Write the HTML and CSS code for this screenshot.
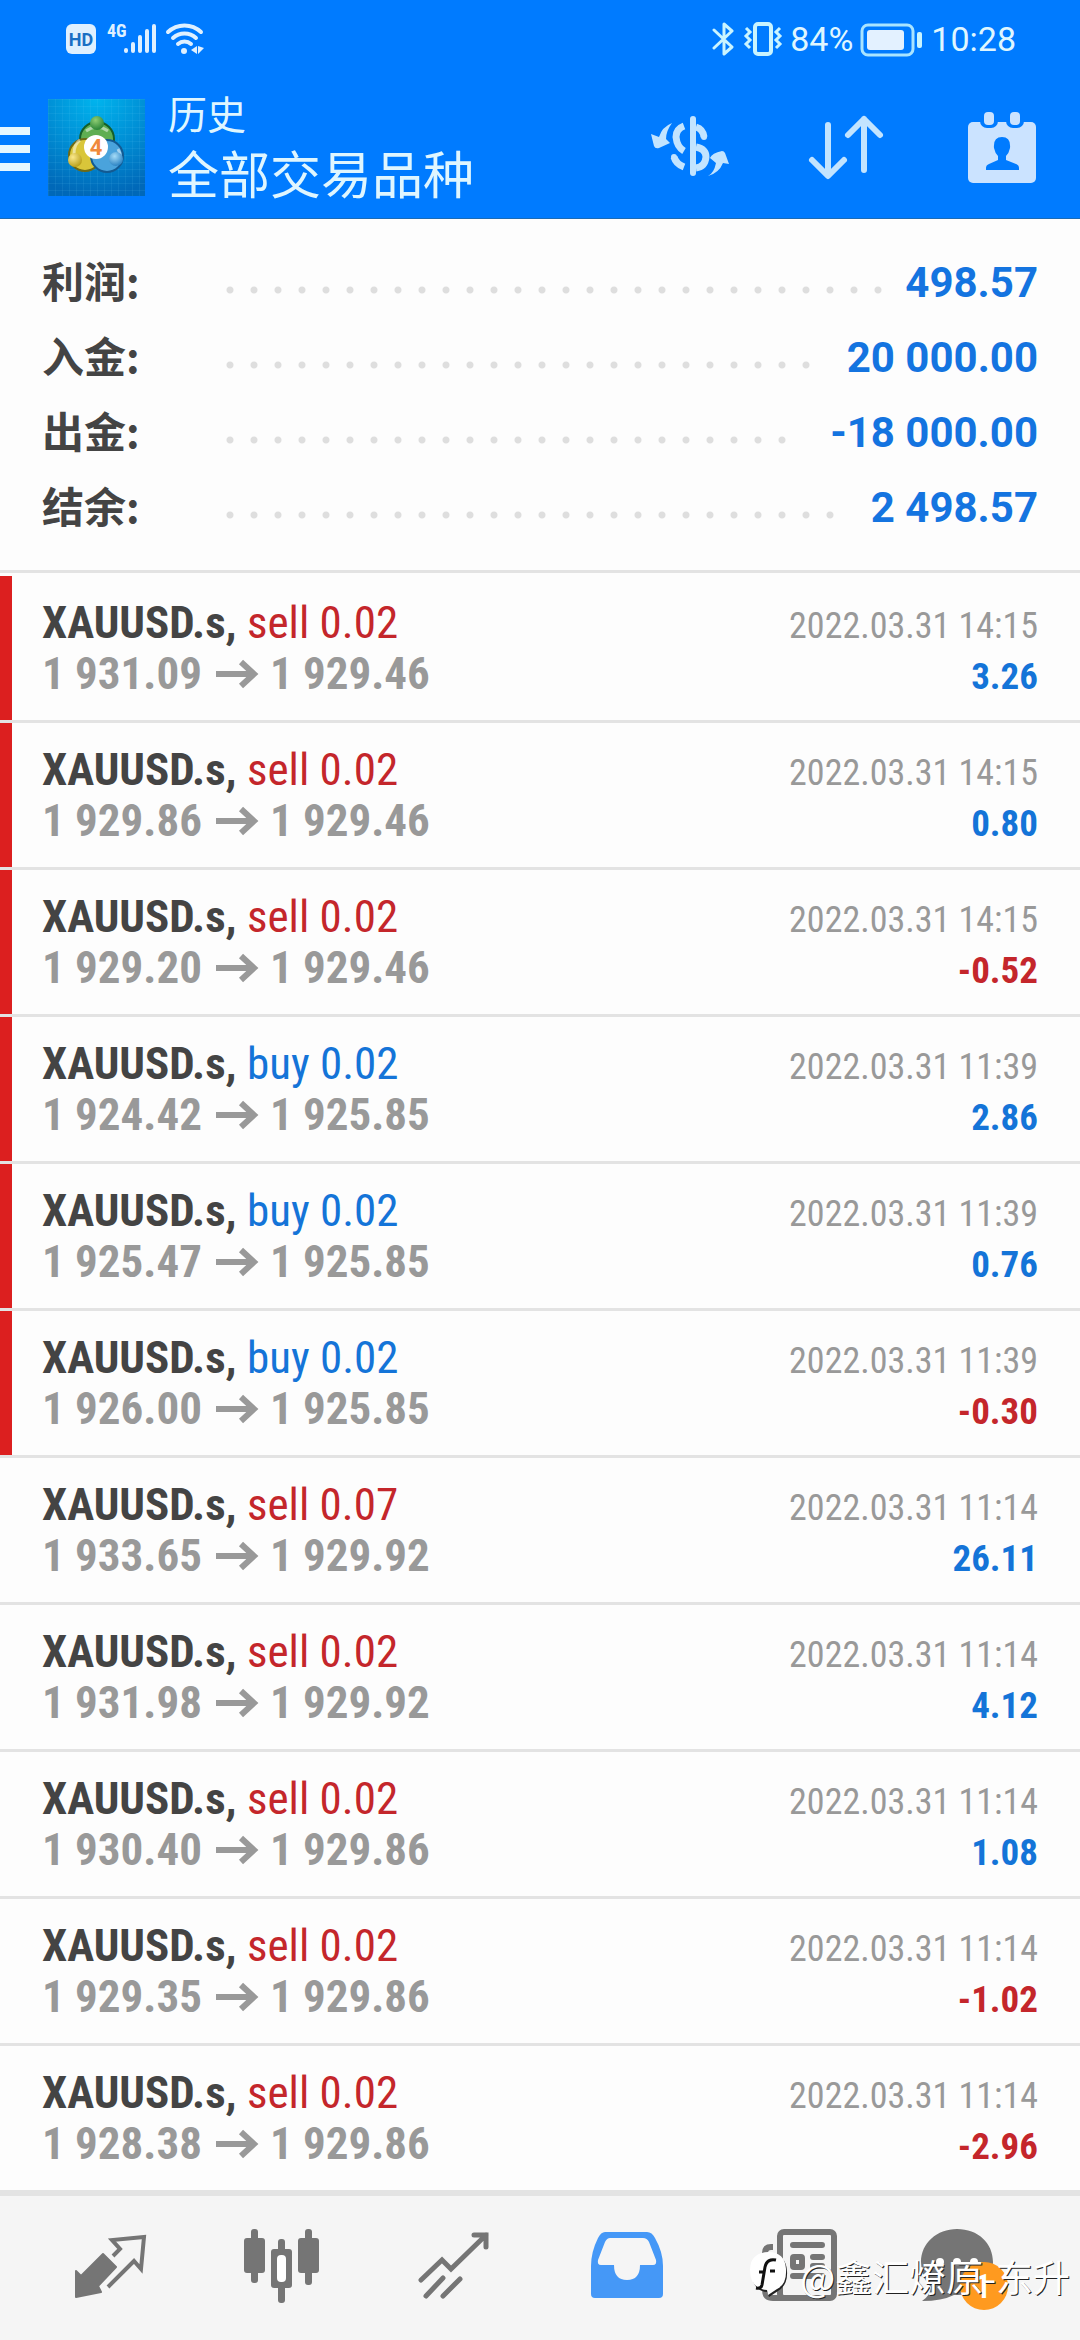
FILE: index.html
```
<!DOCTYPE html>
<html lang="zh-CN">
<head>
<meta charset="utf-8">
<meta name="viewport" content="width=device-width, initial-scale=1">
<title>历史</title>
<link rel="stylesheet" href="styles.css">
</head>
<body>
<div class="page">
  <header class="header">
    <div class="status">
      <svg class="status-icons" width="140" height="36" viewBox="0 0 140 36">
        <rect x="0" y="3" width="30" height="30" rx="6" fill="#dff0ff"/>
        <text x="15" y="25" class="badge-hd">HD</text>
        <text x="41" y="16" class="badge-4g">4G</text>
        <g stroke="#dff0ff" stroke-width="4" stroke-linecap="round">
          <path d="M60 29v1M67 23v7M74 16v14M81 10v20M88 5v25"/>
        </g>
        <g fill="none" stroke="#dff0ff" stroke-width="4" stroke-linecap="round">
          <path d="M102 11a24 24 0 0 1 33 0M107 17a17 17 0 0 1 23 0M112 23a10 10 0 0 1 13 0"/>
        </g>
        <circle cx="118" cy="30" r="3" fill="#dff0ff"/>
        <path d="M125 29l6-4v8zM138 27l-6 6v-8z" fill="#dff0ff"/>
      </svg>
      <div class="status-right">
        <svg width="22" height="36" viewBox="0 0 22 36" fill="none" stroke="#c9f4ff" stroke-width="3" stroke-linejoin="round" stroke-linecap="round"><path d="M2 9l18 17-8 7V3l8 7L2 27"/></svg>
        <svg width="40" height="36" viewBox="0 0 40 36" fill="none" stroke="#c9f4ff" stroke-width="3"><rect x="12" y="3" width="16" height="30" rx="3" stroke-width="4"/><path d="M3 7l4 4-4 4 4 4-4 4 4 4M37 7l-4 4 4 4-4 4 4 4-4 4"/></svg>
        <span>84%</span>
        <svg width="64" height="36" viewBox="0 0 64 36"><rect x="2" y="4" width="51" height="30" rx="6" fill="none" stroke="#a9e4ff" stroke-width="3"/><rect x="7" y="9" width="37" height="20" rx="3" fill="#e3f1ff"/><rect x="57" y="11" width="5" height="16" rx="2" fill="#c9f4ff"/></svg>
        <span>10:28</span>
      </div>
    </div>
    <div class="bar">
      <button class="menu" aria-label="菜单"><i></i><i></i><i></i></button>
      <svg class="logo" viewBox="0 0 97 97" role="img" aria-label="MetaTrader 4">
        <defs>
          <radialGradient id="sky" cx=".5" cy="0" r="1"><stop offset="0" stop-color="#00b4ee"/><stop offset=".5" stop-color="#0090d6"/><stop offset="1" stop-color="#0068b8"/></radialGradient>
          <radialGradient id="gr" cx=".4" cy=".3" r=".8"><stop offset="0" stop-color="#8fce74"/><stop offset="1" stop-color="#1c7a2e"/></radialGradient>
          <radialGradient id="ye" cx=".35" cy=".3" r=".8"><stop offset="0" stop-color="#fbe98c"/><stop offset="1" stop-color="#b3980f"/></radialGradient>
          <radialGradient id="bl" cx=".4" cy=".3" r=".8"><stop offset="0" stop-color="#a5dcf7"/><stop offset="1" stop-color="#1b77bd"/></radialGradient>
          <pattern id="grid" width="7" height="7" patternUnits="userSpaceOnUse"><path d="M0 0H7M0 0V7" stroke="#6fd0f5" stroke-opacity=".2"/></pattern>
        </defs>
        <rect width="97" height="97" fill="url(#sky)"/><rect width="97" height="97" fill="url(#grid)"/>
        <circle cx="49" cy="40" r="17" fill="#5fae52" stroke="#155f2a" stroke-width="2"/>
        <circle cx="37" cy="56" r="16" fill="#d9c63a" stroke="#6e6a15" stroke-width="2"/>
        <circle cx="59" cy="57" r="16" fill="#4aa3dc" stroke="#135a92" stroke-width="2"/>
        <path d="M38 32q11-8 22 0M26 55q0-10 6-14M70 50q5 8-2 16" fill="none" stroke="#fff" stroke-opacity=".5" stroke-width="3"/>
        <circle cx="49" cy="24" r="7" fill="url(#gr)"/><circle cx="27" cy="61" r="7" fill="url(#ye)"/><circle cx="68" cy="60" r="7" fill="url(#bl)"/>
        <circle cx="48" cy="48" r="12" fill="#fff"/>
        <text x="48" y="56" class="logo-num">4</text>
      </svg>
      <div class="titles">
        <p class="sub">历史</p>
        <h1>全部交易品种</h1>
      </div>
      <div class="actions">
        <button aria-label="货币">
          <svg width="80" height="80" viewBox="0 0 80 80" fill="#c2e4ff">
            <rect x="40" y="9" width="6" height="60" rx="3"/>
            <g fill="none" stroke="#c2e4ff" stroke-width="7"><path d="M34 19Q26 22 26 30Q27 40 34 44"/><path d="M24 50Q26 57 34 60"/><path d="M46 20Q53 22 54 30M46 40Q56 42 56 50Q55 60 46 61"/></g>
            <circle cx="54" cy="30" r="3"/><circle cx="24" cy="50" r="3"/>
            <path d="M22 16Q12 20 9 30L1 27L4 39Q5 42 9 41L20 36L16 32Q16 24 22 16zM58 69Q64 66 66 56L60 51Q62 46 72 44Q74 44 75 46L79 57L73 56Q69 66 58 69z"/>
          </svg>
        </button>
        <button aria-label="排序">
          <svg width="80" height="80" viewBox="0 0 80 80" fill="none" stroke="#c2e4ff" stroke-width="6" stroke-linecap="round" stroke-linejoin="round"><path d="M22 18V68M6 53L22 69L38 53M58 63V12M42 28L58 12L74 28"/></svg>
        </button>
        <button aria-label="日期">
          <svg width="80" height="80" viewBox="0 0 80 80"><rect x="6" y="15" width="68" height="61" rx="5" fill="#cbe3ff"/><g fill="#007bff"><rect x="18" y="1" width="18" height="20" rx="7"/><rect x="44" y="1" width="18" height="20" rx="7"/><path d="M40 30Q49 30 48 41Q47 46 44 49V53L54 57Q57 58 57 61V63H24V61Q24 58 27 57L36 53V49Q33 46 32 41Q31 30 40 30z"/></g><g fill="#cbe3ff"><rect x="22" y="5" width="10" height="13" rx="4"/><rect x="48" y="5" width="10" height="13" rx="4"/></g></svg>
        </button>
      </div>
    </div>
  </header>

  <main class="main">
    <dl class="summary">
      <div><dt>利润:</dt><dd class="dots"></dd><dd>498.57</dd></div>
      <div><dt>入金:</dt><dd class="dots"></dd><dd>20 000.00</dd></div>
      <div><dt>出金:</dt><dd class="dots"></dd><dd>-18 000.00</dd></div>
      <div><dt>结余:</dt><dd class="dots"></dd><dd>2 498.57</dd></div>
    </dl>
    <svg width="0" height="0" class="defs"><symbol id="arrow" viewBox="0 0 44 30"><path d="M1 15H39M26 3L39 15L26 27" fill="none" stroke="#999" stroke-width="6"/></symbol></svg>
    <ul class="deals">
      <li class="new"><p><b>XAUUSD.s, <span class="sell">sell 0.02</span></b><time>2022.03.31 14:15</time></p><p><span class="price">1 931.09<svg><use href="#arrow"/></svg>1 929.46</span><span class="gain">3.26</span></p></li>
      <li class="new"><p><b>XAUUSD.s, <span class="sell">sell 0.02</span></b><time>2022.03.31 14:15</time></p><p><span class="price">1 929.86<svg><use href="#arrow"/></svg>1 929.46</span><span class="gain">0.80</span></p></li>
      <li class="new"><p><b>XAUUSD.s, <span class="sell">sell 0.02</span></b><time>2022.03.31 14:15</time></p><p><span class="price">1 929.20<svg><use href="#arrow"/></svg>1 929.46</span><span class="loss">-0.52</span></p></li>
      <li class="new"><p><b>XAUUSD.s, <span class="buy">buy 0.02</span></b><time>2022.03.31 11:39</time></p><p><span class="price">1 924.42<svg><use href="#arrow"/></svg>1 925.85</span><span class="gain">2.86</span></p></li>
      <li class="new"><p><b>XAUUSD.s, <span class="buy">buy 0.02</span></b><time>2022.03.31 11:39</time></p><p><span class="price">1 925.47<svg><use href="#arrow"/></svg>1 925.85</span><span class="gain">0.76</span></p></li>
      <li class="new"><p><b>XAUUSD.s, <span class="buy">buy 0.02</span></b><time>2022.03.31 11:39</time></p><p><span class="price">1 926.00<svg><use href="#arrow"/></svg>1 925.85</span><span class="loss">-0.30</span></p></li>
      <li><p><b>XAUUSD.s, <span class="sell">sell 0.07</span></b><time>2022.03.31 11:14</time></p><p><span class="price">1 933.65<svg><use href="#arrow"/></svg>1 929.92</span><span class="gain">26.11</span></p></li>
      <li><p><b>XAUUSD.s, <span class="sell">sell 0.02</span></b><time>2022.03.31 11:14</time></p><p><span class="price">1 931.98<svg><use href="#arrow"/></svg>1 929.92</span><span class="gain">4.12</span></p></li>
      <li><p><b>XAUUSD.s, <span class="sell">sell 0.02</span></b><time>2022.03.31 11:14</time></p><p><span class="price">1 930.40<svg><use href="#arrow"/></svg>1 929.86</span><span class="gain">1.08</span></p></li>
      <li><p><b>XAUUSD.s, <span class="sell">sell 0.02</span></b><time>2022.03.31 11:14</time></p><p><span class="price">1 929.35<svg><use href="#arrow"/></svg>1 929.86</span><span class="loss">-1.02</span></p></li>
      <li><p><b>XAUUSD.s, <span class="sell">sell 0.02</span></b><time>2022.03.31 11:14</time></p><p><span class="price">1 928.38<svg><use href="#arrow"/></svg>1 929.86</span><span class="loss">-2.96</span></p></li>
    </ul>
  </main>

  <nav class="tabs">
    <a href="#quotes" aria-label="行情"><svg width="80" height="88" viewBox="0 0 80 88"><path d="M33 30L46 43L28 62L31 68L6 73L6 47L11 52z" fill="#757575" stroke="#757575" stroke-width="2" stroke-linejoin="round"/><path d="M43 32L50 25L42 16L74 13L71 45L64 37L38 63" fill="none" stroke="#757575" stroke-width="4"/></svg></a>
    <a href="#chart" aria-label="图表"><svg width="80" height="88" viewBox="0 0 80 88" fill="#757575"><rect x="9" y="5" width="7" height="54" rx="3"/><rect x="2" y="14" width="21" height="35" rx="3"/><rect x="36" y="15" width="7" height="64" rx="3"/><rect x="29" y="25" width="21" height="39" rx="3"/><rect x="35" y="31" width="9" height="27" rx="4" fill="#fff"/><rect x="63" y="5" width="7" height="56" rx="3"/><rect x="56" y="14" width="21" height="35" rx="3"/></svg></a>
    <a href="#trade" aria-label="交易"><svg width="80" height="88" viewBox="0 0 80 88" fill="none" stroke="#757575" stroke-width="5" stroke-linecap="round"><path d="M7 56L28 36L37 45L72 11M60 11H72V23M12 72L29 54M29 72L46 55"/></svg></a>
    <a href="#history" aria-label="历史" aria-current="page"><svg width="80" height="88" viewBox="0 0 80 88"><path d="M19 8H61Q66 8 69 14Q77 28 77 42V70Q77 74 73 74H9Q5 74 5 70V42Q5 28 12 14Q15 8 19 8z" fill="#4598f7"/><path d="M24 14H57Q61 14 63 18L70 36Q71 41 67 41H54Q54 56 41 56Q28 56 28 41H15Q11 41 12 36L19 18Q21 14 24 14z" fill="#f5f5f5"/></svg></a>
    <a href="#news" aria-label="新闻"><svg width="80" height="88" viewBox="0 0 80 88" fill="none" stroke="#757575" stroke-width="6"><rect x="22" y="8" width="54" height="66" rx="4"/><path d="M15 23H13Q7 23 7 29V66Q7 74 15 74H26"/><g stroke-linecap="round"><path d="M35 21H64M55 33H64M55 42H64M35 52H64"/></g><rect x="35" y="33" width="9" height="10" rx="1"/></svg></a>
    <a href="#mail" aria-label="消息"><svg width="96" height="88" viewBox="0 0 96 88"><path d="M35 5C56 5 71 19 71 38C71 58 56 71 36 71H32Q20 77 0 77Q8 72 9 63Q-1 54 -1 38C-1 19 15 5 35 5z" fill="#757575"/><g fill="#fff"><circle cx="18" cy="38" r="4"/><circle cx="35" cy="38" r="4"/><circle cx="52" cy="38" r="4"/></g><circle cx="62" cy="62" r="24" fill="#ff9a1f"/><text x="61" y="74" class="badge-count">1</text></svg></a>
  </nav>

  <div class="watermark">
    <svg width="40" height="50" viewBox="0 0 40 50"><path d="M19 3Q36 3 37 20Q38 34 28 40L19 46L17 41Q2 40 2 21Q2 4 19 3z" fill="#222"/><path d="M18 1Q35 1 36 18Q37 33 27 38L18 44L17 39Q0 38 0 19Q0 2 18 1z" fill="#fff"/><path d="M26 9Q17 7 15 16L12 34Q11 38 6 37M9 21H15M20 20H25" fill="none" stroke="#111" stroke-width="3"/></svg>
    <span>@鑫汇燎原-东升</span>
  </div>
</div>
</body>
</html>
```
FILE: styles.css
```
* { box-sizing: border-box; }

body {
  margin: 0;
  background: #fdfdfd;
  color: #444;
  font-family: Roboto, "Noto Sans CJK SC", sans-serif;
}

p, h1, dl, dd, ul { margin: 0; padding: 0; }

button { border: 0; padding: 0; background: none; }

.page {
  position: relative;
  display: flex;
  flex-direction: column;
  min-height: 100vh;
}

.header {
  background: #007bff;
  border-bottom: 1px solid #1b6bb5;
  color: #dff6ff;
}

/* Phone status line */
.status {
  display: flex;
  justify-content: space-between;
  align-items: center;
  height: 76px;
  padding: 2px 64px 0 66px;
}

.status-right {
  display: flex;
  align-items: center;
  gap: 7px;
  font-size: 34px;
  line-height: 40px;
}

.status-right svg:first-child { margin-right: 2px; }

.badge-hd { font: 700 18px Roboto, sans-serif; fill: #1a6fc4; text-anchor: middle; }
.badge-4g { font: 700 18px "Roboto Condensed", sans-serif; fill: #dff0ff; }
.badge-count { font: 500 34px Roboto, sans-serif; fill: #fff; text-anchor: middle; }
.logo-num { font: 700 22px Roboto, sans-serif; fill: #f08a3c; text-anchor: middle; }

/* Title bar */
.bar {
  display: flex;
  align-items: center;
  height: 142px;
}

.menu {
  display: flex;
  flex-direction: column;
  gap: 10px;
  width: 30px;
  padding-top: 4px;
}

.menu i { height: 8px; background: #e6f7ff; }

.logo {
  width: 97px;
  height: 97px;
  margin-left: 18px;
}

.titles {
  flex: 1;
  margin-left: 23px;
  font-family: "Noto Sans CJK SC", sans-serif;
}

.sub { font-size: 39px; line-height: 50px; }

h1 { font-size: 51px; line-height: 70px; font-weight: 400; }

.actions { display: flex; }

.actions button {
  display: flex;
  justify-content: center;
  width: 156px;
}

/* Totals */
.main { flex: 1; }

.summary {
  padding: 26px 42px 25px;
  font-size: 42px;
  font-weight: 700;
  line-height: 75px;
}

.summary div { display: flex; }

.summary dt {
  width: 184px;
  font-family: "Noto Sans CJK SC", sans-serif;
  line-height: 70px;
}

.summary dd { color: #1474e0; }

.summary .dots { flex: 1; margin-right: 7px; }

/* The leader holds whole dots only */
.summary .dots::before {
  content: "";
  display: block;
  width: round(down, 100%, 24px);
  height: 90px;
  margin-bottom: -15px;
  background: radial-gradient(circle at 4px 50%, #dedede 3px, transparent 4px) 0 50% / 24px 24px repeat-x;
}

/* Deals */
.defs { display: block; }

.deals {
  padding-top: 3px;
  border-top: 3px solid #e3e3e3;
  list-style: none;
  font-family: "Roboto Condensed", Roboto, sans-serif;
}

.deals li {
  padding: 21px 42px;
  border-bottom: 3px solid #e3e3e3;
}

.deals .new { box-shadow: inset 12px 0 #dc1f1f; }

.deals p {
  display: flex;
  justify-content: space-between;
  align-items: baseline;
  height: 51px;
  font-size: 45px;
  line-height: 51px;
}

.deals b span { font-weight: 400; }

.deals time { color: #999; font-size: 36px; }

.price { color: #999; font-weight: 700; }

.price svg { width: 44px; height: 30px; margin: 0 11px 0 13px; }

.sell { color: #c4262b; }
.buy { color: #1474d8; }

.gain, .loss { font-size: 37px; font-weight: 700; }
.gain { color: #1474d8; }
.loss { color: #c4262b; }

/* Bottom tabs */
.tabs {
  display: flex;
  padding: 28px 24px;
  border-top: 3px solid #e3e3e3;
  background: #f5f5f5;
}

.tabs a { display: flex; flex: 1; justify-content: center; }

.tabs svg { overflow: visible; }

/* Author mark over the tabs */
.watermark {
  position: absolute;
  right: 10px;
  bottom: 36px;
  display: flex;
  align-items: center;
  gap: 10px;
  color: #fff;
  font-family: "Noto Sans CJK SC", sans-serif;
  font-size: 37px;
  line-height: 56px;
  text-shadow: 1px 1px 0 #222;
}
```
